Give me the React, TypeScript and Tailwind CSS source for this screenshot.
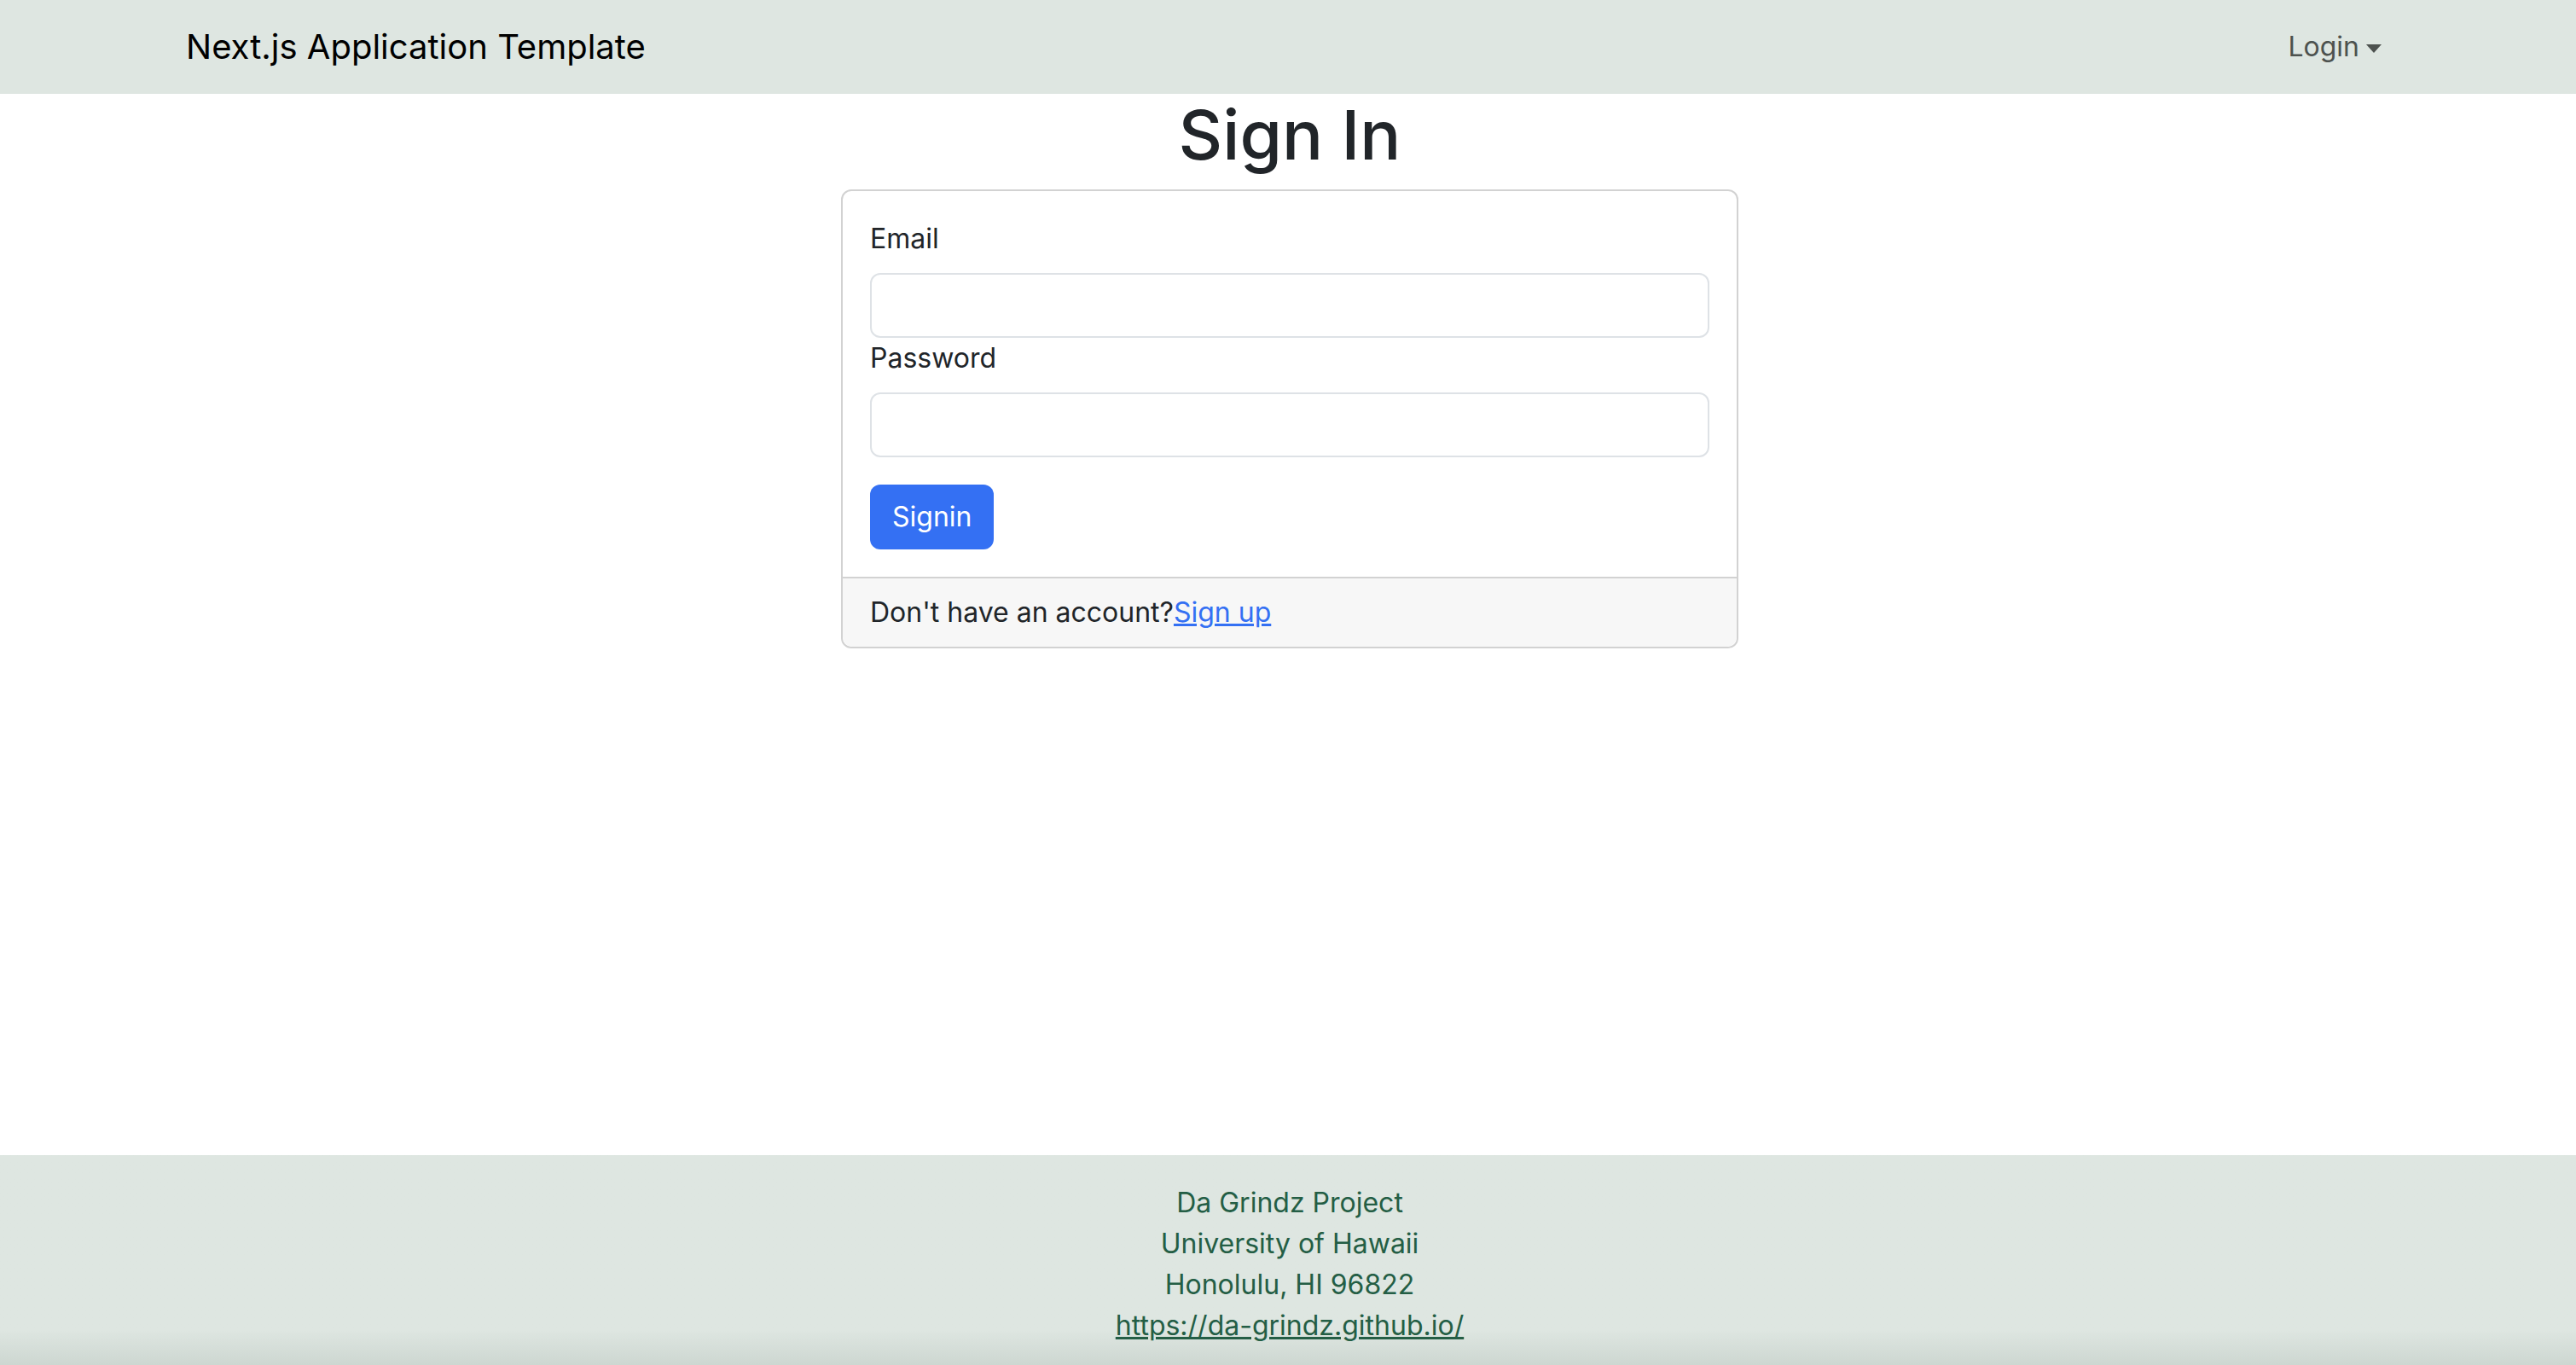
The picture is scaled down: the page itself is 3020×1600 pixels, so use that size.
export default function App() {
  return (
    <div className="flex h-[1610px] flex-col bg-white pl-1 font-['Inter','Liberation_Sans',sans-serif] text-[32px] leading-[48px] text-[#212529]">
      {/* Navbar */}
      <nav className="-ml-1 h-[110px] shrink-0 bg-[#dee6e1] pl-1">
        <div className="mx-auto flex h-full w-[2640px] items-center justify-between px-6">
          <a className="ml-0.5 text-[40px] leading-[60px] text-black">Next.js Application Template</a>
          <button className="flex items-center px-4 text-[32px] leading-[48px] text-[#4d524f]">
            Login
            <span className="ml-2 mt-1 h-0 w-0 border-x-[9px] border-t-[10px] border-x-transparent border-t-[#4d524f]" />
          </button>
        </div>
      </nav>

      {/* Main */}
      <main className="flex flex-1 flex-col items-center">
        <h1 className="mb-4 text-[80px] font-medium leading-[96px] text-[#212529]">Sign In</h1>
        <div className="w-[1052px] rounded-xl border-2 border-[#d2d2d2]">
          <form className="px-8 py-8">
            <label className="mb-4 block">Email</label>
            <input
              type="text"
              className="block h-[76px] w-full rounded-xl border-2 border-[#dee2e6] bg-white px-6 outline-none"
            />
            <label className="mb-4 block">Password</label>
            <input
              type="password"
              className="block h-[76px] w-full rounded-xl border-2 border-[#dee2e6] bg-white px-6 outline-none"
            />
            <button
              type="button"
              className="mt-8 h-[76px] rounded-xl bg-[#3470f3] px-[26px] text-white"
            >
              Signin
            </button>
          </form>
          <div className="rounded-b-xl border-t-2 border-[#d2d2d2] bg-[#f7f7f7] px-8 py-4">
            Don&apos;t have an account?
            <a href="#" className="text-[#3470f3] underline">
              Sign up
            </a>
          </div>
        </div>
      </main>

      {/* Footer */}
      <footer className="-ml-1 shrink-0 bg-linear-to-b from-[#dee6e1] via-[#dee6e1] via-80% to-[#c9d3cd] pl-1 py-8 text-center text-[#245e45]">
        <div>Da Grindz Project</div>
        <div>University of Hawaii</div>
        <div>Honolulu, HI 96822</div>
        <a href="#" className="underline">
          https://da-grindz.github.io/
        </a>
      </footer>
    </div>
  )
}
